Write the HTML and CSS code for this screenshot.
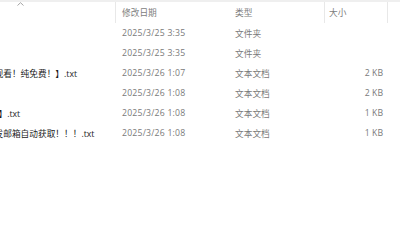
FILE: index.html
```html
<!DOCTYPE html>
<html lang="zh-CN">
<head>
<meta charset="utf-8">
<title>文件列表</title>
<link rel="stylesheet" href="styles.css">
</head>
<body>
<div class="explorer">
  <div class="row header">
    <div class="cell name sep">
      <svg class="caret" width="7" height="4" viewBox="0 0 7 4"><polyline points="0.5,3.5 3.5,0.7 6.5,3.5" fill="none" stroke="#9a9a9a" stroke-width="0.9"/></svg>
    </div>
    <div class="cell date">修改日期</div>
    <div class="cell type sep">类型</div>
    <div class="cell size-h sep">大小</div>
    <div class="cell rest"></div>
  </div>
  <div class="row">
    <div class="cell name"></div>
    <div class="cell date">2025/3/25 3:35</div>
    <div class="cell type">文件夹</div>
    <div class="cell size"></div>
    <div class="cell rest"></div>
  </div>
  <div class="row">
    <div class="cell name"></div>
    <div class="cell date">2025/3/25 3:35</div>
    <div class="cell type">文件夹</div>
    <div class="cell size"></div>
    <div class="cell rest"></div>
  </div>
  <div class="row">
    <div class="cell name"><span class="name-text">观看！纯免费！】.txt</span></div>
    <div class="cell date">2025/3/26 1:07</div>
    <div class="cell type">文本文档</div>
    <div class="cell size">2 KB</div>
    <div class="cell rest"></div>
  </div>
  <div class="row">
    <div class="cell name"></div>
    <div class="cell date">2025/3/26 1:08</div>
    <div class="cell type">文本文档</div>
    <div class="cell size">2 KB</div>
    <div class="cell rest"></div>
  </div>
  <div class="row">
    <div class="cell name"><span class="name-text short">】.txt</span></div>
    <div class="cell date">2025/3/26 1:08</div>
    <div class="cell type">文本文档</div>
    <div class="cell size">1 KB</div>
    <div class="cell rest"></div>
  </div>
  <div class="row">
    <div class="cell name"><span class="name-text">发邮箱自动获取！！！.txt</span></div>
    <div class="cell date">2025/3/26 1:08</div>
    <div class="cell type">文本文档</div>
    <div class="cell size">1 KB</div>
    <div class="cell rest"></div>
  </div>
</div>
</body>
</html>
```

FILE: styles.css
```css
html, body {
  margin: 0;
  padding: 0;
  background: #ffffff;
}
body {
  width: 400px;
  height: 230px;
  overflow: hidden;
  font-family: "Open Sans", "Noto Sans CJK SC", sans-serif;
  font-size: 8.7px;
  color: #7a7a7a;
}
.explorer {
  display: flex;
  flex-direction: column;
}
.row {
  display: grid;
  grid-template-columns: 116px 113px 96px 63px 1fr;
  height: 20px;
}
.header {
  height: 21px;
  border-top: 2px solid #efefef;
}
.cell {
  display: flex;
  align-items: center;
  white-space: nowrap;
  overflow: hidden;
  min-width: 0;
}
.header .cell {
  padding-bottom: 1px;
  box-sizing: border-box;
  color: #7d7d7d;
}
.sep {
  border-right: 1px solid #e8e8e8;
}
.name {
  position: relative;
  color: #1c1c1c;
}
.name-text {
  margin-left: -5.5px;
}
.name-text.short {
  margin-left: -1.5px;
}
.caret {
  position: absolute;
  left: 17px;
  top: 0;
}
.date {
  padding-left: 6px;
}
.row:not(.header) .date {
  letter-spacing: 0.2px;
}
.type {
  padding-left: 6px;
}
.size-h {
  padding-left: 4px;
}
.size {
  justify-content: flex-end;
  padding-right: 5px;
}
```
